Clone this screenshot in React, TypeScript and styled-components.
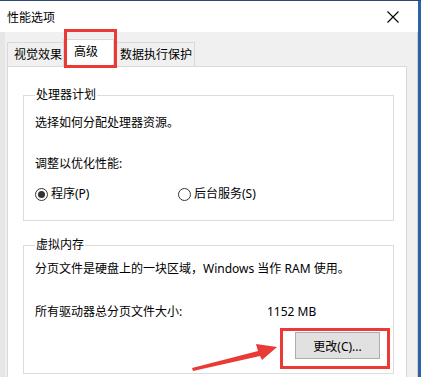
import React from 'react';
import styled, { createGlobalStyle } from 'styled-components';

const GlobalStyle = createGlobalStyle`
  html, body {
    margin: 0;
    padding: 0;
    background: #f0f0f0;
  }
  body {
    font-family: "Noto Sans", "Noto Sans CJK SC", sans-serif;
    font-size: 12px;
    color: #000;
  }
`;

const tabs = [
  { label: '视觉效果', width: 57, active: false },
  { label: '高级', width: 51, active: true },
  { label: '数据执行保护', width: 82, active: false },
];

function App() {
  return (
    <>
      <GlobalStyle />
      <Window>
        <TitleBar>
          <Title>性能选项</Title>
          <CloseIcon width="12" height="12" viewBox="0 0 12 12">
            <path d="M0.5 0.5 L11.5 11.5 M11.5 0.5 L0.5 11.5" stroke="#000" strokeWidth="1.1" />
          </CloseIcon>
        </TitleBar>
        <Body>
          <Content>
            <TabRow>
              {tabs.map((tab) => (
                <Tab key={tab.label} $active={tab.active} $width={tab.width}>
                  {tab.label}
                </Tab>
              ))}
            </TabRow>
            <Panel>
              <GroupBox>
                <Legend>处理器计划</Legend>
                <Line>选择如何分配处理器资源。</Line>
                <Line $gap={25}>调整以优化性能:</Line>
                <RadioRow>
                  <RadioOption>
                    <RadioCircle $checked />
                    程序(P)
                  </RadioOption>
                  <RadioOption>
                    <RadioCircle />
                    后台服务(S)
                  </RadioOption>
                </RadioRow>
              </GroupBox>
              <GroupBox $last>
                <Legend>虚拟内存</Legend>
                <Line $gap={-4}>分页文件是硬盘上的一块区域，Windows 当作 RAM 使用。</Line>
                <SizeRow>
                  <span>所有驱动器总分页文件大小:</span>
                  <span>1152 MB</span>
                </SizeRow>
                <ButtonRow>
                  <Button>更改(C)...</Button>
                </ButtonRow>
              </GroupBox>
            </Panel>
          </Content>
          <RightEdge />
        </Body>

        <RedBox style={{ left: 64, top: 28, width: 53, height: 39 }} />
        <RedBox style={{ left: 280, top: 327, width: 110, height: 41 }} />
        <Arrow width="421" height="377" viewBox="0 0 421 377">
          <polygon
            points="192,367 258,350 256,343 277,346 262,359 260,355 193,370"
            fill="#ea3a35"
          />
        </Arrow>
      </Window>
    </>
  );
}

export default App;

const Window = styled.div`
  position: relative;
  width: 421px;
  height: 377px;
  overflow: hidden;
  background: #f0f0f0;
  border-top: 1px solid #2b4a73;
  box-sizing: border-box;
  display: flex;
  flex-direction: column;
`;

const TitleBar = styled.div`
  height: 31px;
  flex: none;
  background: #fff;
  display: flex;
  align-items: center;
  justify-content: space-between;
  padding: 0 19px 0 7px;
  border-right: 3px solid #2b62a8;
`;

const Title = styled.span`
  font-size: 12px;
  color: #000;
`;

const CloseIcon = styled.svg`
  display: block;
`;

const Body = styled.div`
  flex: 1;
  display: flex;
  min-height: 0;
`;

const Content = styled.div`
  flex: 1;
  display: flex;
  flex-direction: column;
  padding: 7px 10px 0 7px;
  background: linear-gradient(to right, #e6e6e6 0, #e6e6e6 5px, #f0f0f0 5px);
`;

const RightEdge = styled.div`
  width: 3px;
  flex: none;
  background: #2b62a8;
  border-left: 1px solid #d0d0d0;
`;

const TabRow = styled.div`
  display: flex;
  align-items: flex-end;
  height: 28px;
  position: relative;
  z-index: 1;
  margin-bottom: -1px;
`;

const Tab = styled.div<{ $active?: boolean; $width: number }>`
  box-sizing: border-box;
  width: ${(p) => p.$width}px;
  height: ${(p) => (p.$active ? 28 : 25)}px;
  padding-left: ${(p) => (p.$active ? 10 : 6)}px;
  padding-top: ${(p) => (p.$active ? 4 : 4)}px;
  background: ${(p) => (p.$active ? '#fff' : '#f0f0f0')};
  border: 1px solid #d9d9d9;
  border-bottom: ${(p) => (p.$active ? 'none' : '1px solid #d9d9d9')};
  margin-left: ${(p) => (p.$active ? -1 : 0)}px;
  margin-right: ${(p) => (p.$active ? -1 : 0)}px;
  position: relative;
  z-index: ${(p) => (p.$active ? 2 : 1)};
  line-height: 16px;
  white-space: nowrap;
`;

const Panel = styled.div`
  flex: 1;
  background: #fff;
  border: 1px solid #d9d9d9;
  border-bottom: none;
  padding: 20px 12px 0 15px;
  display: flex;
  flex-direction: column;
`;

const GroupBox = styled.fieldset<{ $last?: boolean }>`
  margin: 0 0 ${(p) => (p.$last ? 0 : 16)}px 0;
  padding: 12px 12px ${(p) => (p.$last ? 14 : 18)}px 11px;
  border: 1px solid #dcdcdc;
  min-width: 0;
`;

const Legend = styled.legend`
  padding: 0 1px;
  line-height: 16px;
  font-size: 12px;
`;

const Line = styled.div<{ $gap?: number }>`
  line-height: 16px;
  margin-top: ${(p) => p.$gap ?? 0}px;
  white-space: nowrap;
`;

const RadioRow = styled.div`
  display: grid;
  grid-template-columns: 143px 1fr;
  margin-top: 14px;
  line-height: 16px;
`;

const RadioOption = styled.label`
  display: flex;
  align-items: center;
  gap: 3px;
`;

const RadioCircle = styled.span<{ $checked?: boolean }>`
  box-sizing: border-box;
  width: 13px;
  height: 13px;
  border-radius: 50%;
  border: 1px solid #333;
  background: #fff;
  display: flex;
  align-items: center;
  justify-content: center;

  &::after {
    content: '';
    width: 7px;
    height: 7px;
    border-radius: 50%;
    background: ${(p) => (p.$checked ? '#333' : 'transparent')};
  }
`;

const SizeRow = styled.div`
  display: grid;
  grid-template-columns: 232px 1fr;
  margin-top: 27px;
  line-height: 16px;
`;

const ButtonRow = styled.div`
  display: flex;
  justify-content: flex-end;
  margin-top: 12px;
`;

const Button = styled.button`
  width: 85px;
  height: 27px;
  margin-right: 1px;
  background: #e1e1e1;
  border: 1px solid #adadad;
  font-family: "Noto Sans", "Noto Sans CJK SC", sans-serif;
  font-size: 12px;
  color: #000;
  padding: 0;
`;

const RedBox = styled.div`
  position: absolute;
  box-sizing: border-box;
  border: 3px solid #ea3a35;
  pointer-events: none;
  z-index: 5;
`;

const Arrow = styled.svg`
  position: absolute;
  left: 0;
  top: 0;
  pointer-events: none;
  z-index: 6;
`;
